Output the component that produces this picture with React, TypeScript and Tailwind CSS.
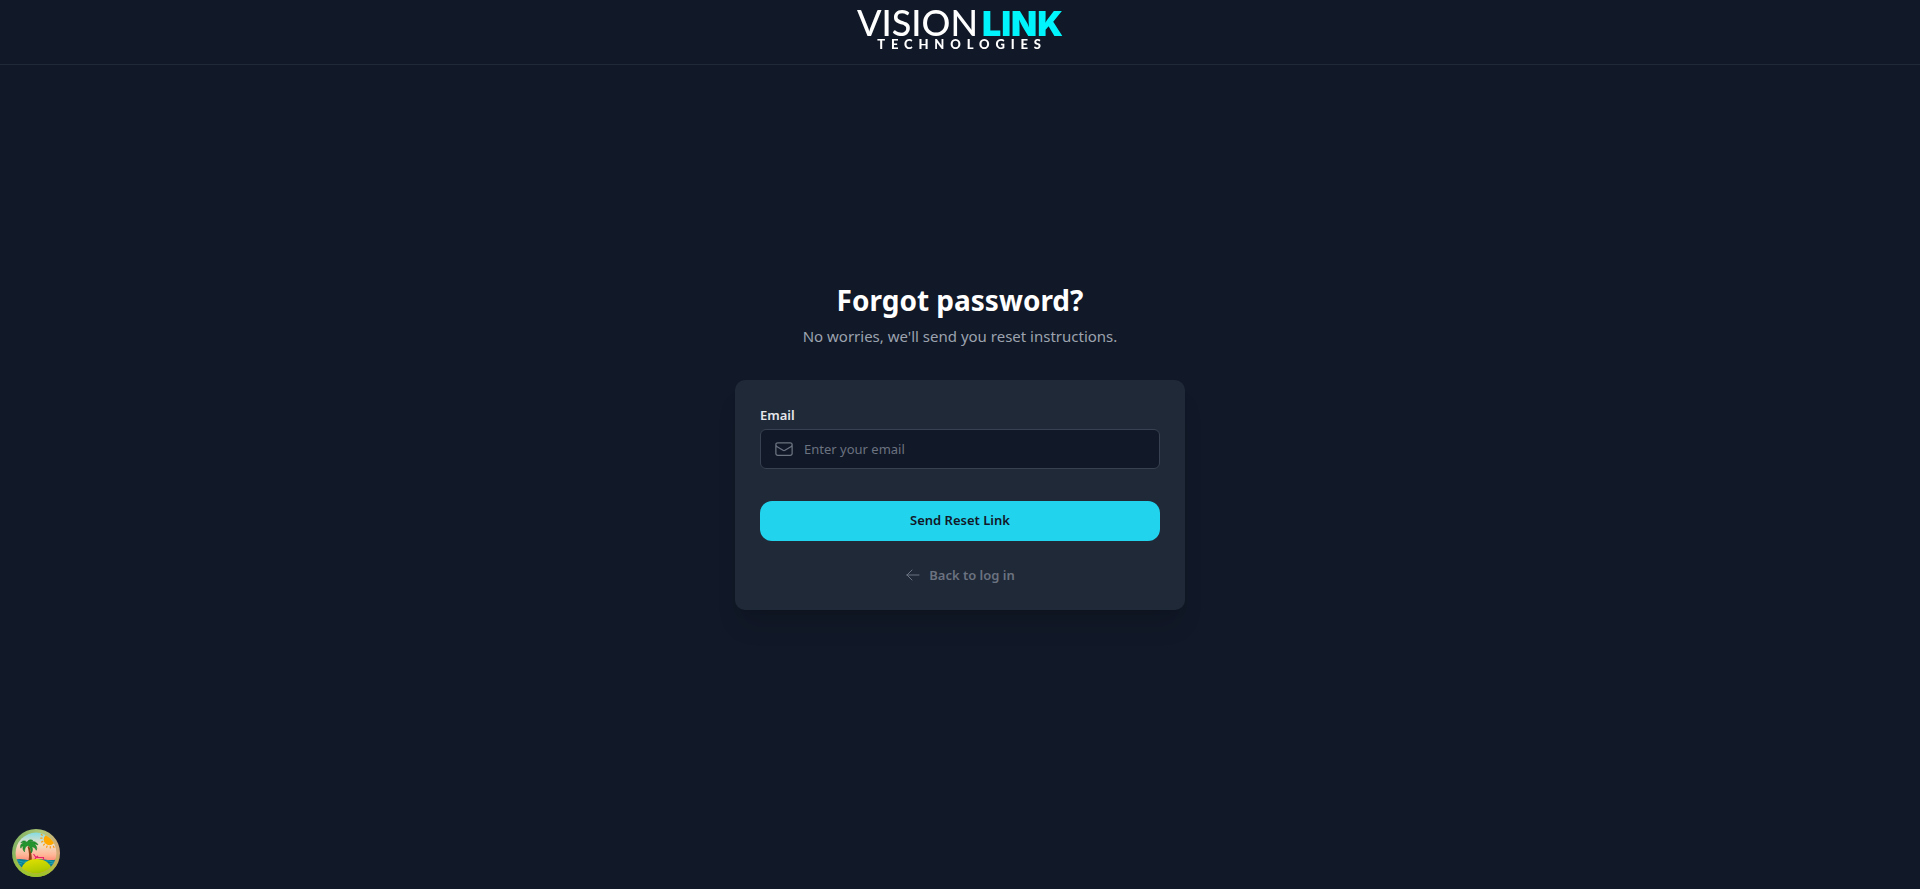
import { HiOutlineArrowLeft, HiOutlineEnvelope } from "react-icons/hi2";

function Logo() {
  return (
    <a
      href="#home"
      aria-label="VisionLink Technologies"
      className="flex flex-col items-center text-white"
    >
      <span className="flex items-baseline gap-1">
        <span className="font-['Lato',sans-serif] text-4xl leading-7 font-medium">VISION</span>
        <span className="font-['Inter',sans-serif] text-[34px] leading-7 font-black text-[#00f4fc]">
          LINK
        </span>
      </span>
      <span className="pl-1 font-['Lato',sans-serif] text-[13px] leading-3 font-black tracking-[0.45em]">
        TECHNOLOGIES
      </span>
    </a>
  );
}

function IslandIcon() {
  return (
    <svg viewBox="0 0 48 48" className="size-12" aria-hidden="true">
      <defs>
        <linearGradient id="ring" x1="0" y1="0.3" x2="1" y2="0.6">
          <stop offset="0" stopColor="#7fb060" />
          <stop offset="0.5" stopColor="#b0c878" />
          <stop offset="1" stopColor="#dba378" />
        </linearGradient>
        <linearGradient id="ringBottom" x1="0" y1="0" x2="0" y2="1">
          <stop offset="0.5" stopColor="#9cc51f" stopOpacity="0" />
          <stop offset="1" stopColor="#9cc51f" />
        </linearGradient>
        <linearGradient id="sky" x1="0" y1="0" x2="0" y2="1">
          <stop offset="0" stopColor="#7fdbe4" />
          <stop offset="0.3" stopColor="#f0dfc4" />
          <stop offset="0.55" stopColor="#ffb595" />
          <stop offset="0.7" stopColor="#ff8674" />
        </linearGradient>
        <linearGradient id="sand" x1="0.4" y1="0" x2="0.6" y2="1">
          <stop offset="0" stopColor="#dede00" />
          <stop offset="0.5" stopColor="#b4cc00" />
          <stop offset="1" stopColor="#6fae00" />
        </linearGradient>
        <clipPath id="disc">
          <circle cx="24" cy="24" r="20.4" />
        </clipPath>
      </defs>
      <circle cx="24" cy="24" r="24" fill="url(#ring)" />
      <circle cx="24" cy="24" r="24" fill="url(#ringBottom)" />
      <g clipPath="url(#disc)">
        <rect x="3" y="3" width="42" height="42" fill="url(#sky)" />

        {/* Sun */}
        <circle cx="37.500" cy="10.500" r="5.800" fill="#ffa800" />
        <path
          d="M29.300 5.500l1 .7M28.800 9.200h1.300M29.600 13l1.200-.6M31.500 16.200l1-1M34.600 18.300l.5-1.300M38.300 19v-1.300M42 18.400l-.5-1.200"
          stroke="#ff9a10"
          strokeWidth="1.2"
          strokeLinecap="round"
        />

        {/* Sea */}
        <path d="M3 30.500q5-1.200 10 0t10 0 10 0 12 0v8H3z" fill="#0a7f93" />
        <path
          d="M3 32.500q3-1.500 6 0t6 0M33 32.500q3-1.500 6 0t6 0M4 35q3-1.500 6 0M37 35q3-1.500 7 0"
          fill="none"
          stroke="#2fb5bf"
          strokeWidth="0.7"
        />

        {/* Beach chair */}
        <path
          d="M21.500 25l2.500 3.500h7.500v2.500M22.500 31l1.500-2.500 2-1.500"
          fill="none"
          stroke="#e5266b"
          strokeWidth="1.2"
        />

        {/* Palm */}
        <path d="M17 17q3 6 2.800 15h-3.300q1.300-8-.9-14z" fill="#8d3f12" />
        <path
          d="M17 16.800c-3-.8-4.500 2-4.500 6-1.500-1.600-2.200-4-1-5.800-1.300 0-2.200.8-2.600 2.200-1-2.600.3-5 3-5.200-1-.6-2-.6-3-.2 1.300-2.400 4.600-2.600 6.300-.2.400-2.400 3.300-3.600 5.700-2-1.300.1-2 .6-2.500 1.400 3-1.200 6.400 0 7.600 3-1.300-.8-2.500-1-3.700-.7 2.200 1.200 3 3.500 2 6-1-2.400-2.600-3.500-4.600-3.600 1.200 2 1 4.500-.5 6.300-.1-3-1-5.400-2.200-7.200z"
          fill="#23952c"
          stroke="#187c28"
          strokeWidth="0.6"
          strokeLinejoin="round"
        />

        {/* Island */}
        <ellipse cx="24.500" cy="41" rx="15" ry="11" fill="url(#sand)" />
      </g>
    </svg>
  );
}

export default function App() {
  return (
    <div className="min-h-screen bg-[#111827] font-['Noto_Sans',sans-serif] text-white">
      {/* Header */}
      <header className="fixed inset-x-0 top-0 flex h-[65px] justify-center border-b border-[#1f2937] pt-2">
        <Logo />
      </header>

      {/* Form */}
      <main className="flex min-h-screen flex-col items-center justify-center px-4">
        <div className="w-full max-w-[450px]">
          <div className="mb-8 text-center">
            <h1 className="text-[28px] leading-10 font-bold">Forgot password?</h1>
            <p className="mt-1 text-[15px] leading-6 text-[#9ca3af]">
              No worries, we'll send you reset instructions.
            </p>
          </div>

          <form
            className="rounded-[10px] bg-[#1f2937] p-[25px] shadow-xl"
            onSubmit={(event) => event.preventDefault()}
          >
            <label
              htmlFor="email"
              className="block text-[13px] leading-5 font-semibold text-[#e5e7eb]"
            >
              Email
            </label>

            <div className="relative mt-1">
              <HiOutlineEnvelope
                className="pointer-events-none absolute inset-y-0 left-3.5 my-auto size-5 text-[#6b7280]"
                aria-hidden="true"
              />
              <input
                id="email"
                type="email"
                placeholder="Enter your email"
                className="h-10 w-full rounded-md border border-[#374151] bg-[#111827] pr-3 pl-[43px] text-[13px] text-white placeholder:text-[#6b7280] focus:border-[#22d3ee] focus:outline-none"
              />
            </div>

            <button
              type="submit"
              className="mt-8 flex h-10 w-full items-center justify-center rounded-xl bg-[#22d3ee] text-[13px] font-semibold text-[#111827] transition-colors hover:bg-[#67e8f9]"
            >
              Send Reset Link
            </button>

            <div className="mt-6 flex justify-center">
              <a
                href="#login"
                className="flex items-center gap-2 text-[13px] leading-5 font-semibold text-[#6b7280] hover:text-[#9ca3af]"
              >
                <HiOutlineArrowLeft className="size-4" aria-hidden="true" />
                Back to log in
              </a>
            </div>
          </form>
        </div>
      </main>

      {/* Devtools toggle */}
      <button
        type="button"
        aria-label="Open query devtools"
        className="fixed bottom-3 left-3 size-12 rounded-full"
      >
        <IslandIcon />
      </button>
    </div>
  );
}
